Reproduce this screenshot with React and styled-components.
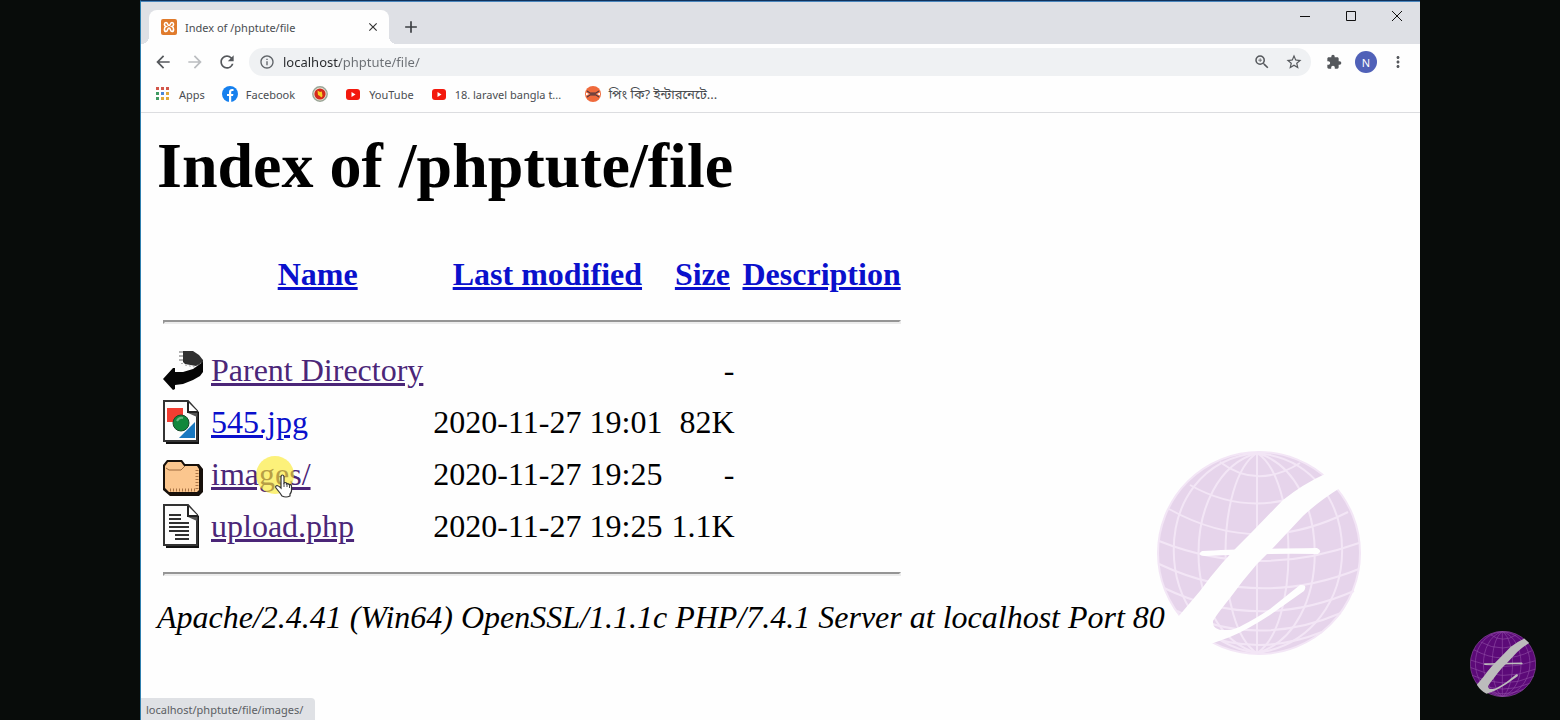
import React from "react";
import styled, { createGlobalStyle } from "styled-components";
import {
  MdAdd,
  MdArrowBack,
  MdArrowForward,
  MdClose,
  MdExtension,
  MdInfoOutline,
  MdMoreVert,
  MdRefresh,
  MdStarBorder,
  MdZoomIn,
} from "react-icons/md";

const uiFont = `"Noto Sans", "Noto Sans Bengali", sans-serif`;
const pageFont = `"Liberation Serif", "Times New Roman", serif`;

const GlobalStyle = createGlobalStyle`
  *, *::before, *::after { box-sizing: border-box; }
  body { margin: 0; background: #080c0a; }
  button { font: inherit; color: inherit; border: 0; padding: 0; background: none; }
`;

const Stage = styled.div`
  position: relative;
  display: flex;
  min-height: 100vh;
  padding: 0 140px;
  background: #080c0a;
`;

const Window = styled.div`
  position: relative;
  flex: 1;
  min-width: 0;
  display: flex;
  flex-direction: column;
  background: #fefefe;
  border-top: 1px solid #10325c;
  border-left: 1px solid #2f7fae;
  font-family: ${uiFont};
  font-size: 11px;
  color: #4a4d51;
`;

const TabStrip = styled.header`
  display: flex;
  align-items: flex-end;
  height: 43px;
  padding-left: 8px;
  background: #dee0e5;
  border-top: 1px solid #4a86bd;
`;

const Tab = styled.div`
  position: relative;
  display: flex;
  align-items: center;
  gap: 8px;
  width: 240px;
  height: 34px;
  padding: 0 8px 0 12px;
  background: #fefefe;
  border-radius: 8px 8px 0 0;

  &::before,
  &::after {
    content: "";
    position: absolute;
    bottom: 0;
    width: 8px;
    height: 8px;
  }
  &::before {
    left: -8px;
    background: radial-gradient(circle at 0 0, transparent 8px, #fefefe 8px);
  }
  &::after {
    right: -8px;
    background: radial-gradient(circle at 100% 0, transparent 8px, #fefefe 8px);
  }
`;

const TabTitle = styled.span`
  flex: 1;
  white-space: nowrap;
`;

const IconButton = styled.button`
  display: grid;
  place-items: center;
  flex: none;
  width: ${(p) => p.$w || 32}px;
  height: ${(p) => p.$h || 32}px;
  color: ${(p) => p.$color || "#55585c"};
  svg { display: block; }
`;

const Controls = styled.div`
  display: flex;
  align-self: flex-start;
  margin-left: auto;
`;

const Toolbar = styled.nav`
  display: flex;
  align-items: center;
  height: 36px;
  padding: 0 6px;
`;

const Omnibox = styled.form`
  flex: 1;
  display: flex;
  align-items: center;
  height: 28px;
  margin: 0 7px 0 6px;
  padding: 0 1px 0 10px;
  border-radius: 14px;
  background: #eff1f3;
  color: #5f6368;
`;

const Address = styled.input`
  flex: 1;
  min-width: 0;
  margin-left: 8px;
  padding: 0;
  border: 0;
  outline: 0;
  font-family: ${uiFont};
  font-size: 13px;
  color: transparent;
  background: linear-gradient(to right, #26282b 57px, #6b6f74 57px);
  background-clip: text;
`;

const Avatar = styled.span`
  display: grid;
  place-items: center;
  width: 22px;
  height: 22px;
  border-radius: 50%;
  background: #5061b8;
  color: #fff;
`;

const Bookmarks = styled.nav`
  display: flex;
  align-items: flex-start;
  gap: 17px;
  height: 33px;
  padding: 0 14px;
  border-bottom: 1px solid #dcdde0;
`;

const Bookmark = styled.a`
  display: flex;
  align-items: center;
  gap: 8px;
  height: 28px;
  min-width: ${(p) => p.$min || 0}px;
  color: inherit;
  font-size: ${(p) => (p.lang ? 13 : 11)}px;
  text-decoration: none;
  white-space: nowrap;
  svg { display: block; flex: none; }
`;

const Listing = styled.main`
  flex: 1;
  padding: 16px 16px 60px;
  font-family: ${pageFont};
  font-size: 32px;
  color: #000;
`;

const Heading = styled.h1`
  margin: 0 0 43px;
  font-size: 64px;
  line-height: 74px;
`;

const FileTable = styled.table`
  border-collapse: separate;
  border-spacing: 4px;
  font-size: 32px;
`;

const Row = styled.tr`
  height: 48px;
`;

const Cell = styled.td`
  padding: ${(p) => (p.$right ? "2px 2px 2px 3px" : "2px")};
  white-space: nowrap;
  text-align: ${(p) => (p.$right ? "right" : "left")};
  line-height: 36px;
  svg { display: block; }
`;

const NameCell = styled(Cell)`
  padding-right: 3px;
`;

const HeadCell = styled.th`
  padding: 2px;
  white-space: nowrap;
  line-height: 36px;
`;

const Link = styled.a`
  position: relative;
  color: ${(p) => (p.$visited ? "#4b2678" : "#0a10cc")};
  text-decoration: underline;
`;

const Rule = styled.hr`
  height: 4px;
  margin: 16px 0;
  border: 2px solid;
  border-color: #959595 #ececec #ececec #959595;
`;

const ServerLine = styled.address`
  line-height: 38px;
`;

const ClickSpot = styled.span`
  position: absolute;
  left: 45px;
  top: 0;
  width: 38px;
  height: 38px;
  border-radius: 50%;
  background: rgba(250, 232, 40, 0.62);
`;

const Pointer = styled.svg`
  position: absolute;
  left: 18px;
  top: 18px;
`;

const StatusBubble = styled.output`
  position: absolute;
  left: 0;
  bottom: 0;
  height: 22px;
  padding: 0 12px 0 5px;
  border-radius: 0 4px 0 0;
  background: #dfe1e5;
  color: #5b5e63;
  line-height: 23px;
`;

const Watermark = styled.div`
  position: absolute;
  right: 59px;
  bottom: 65px;
  svg { display: block; }
`;

const CornerLogo = styled.div`
  position: absolute;
  right: 24px;
  bottom: 23px;
  svg { display: block; }
`;

function Globe({ size, fill, line, stroke, lineWidth }) {
  return (
    <svg width={size} height={size} viewBox="0 0 204 204" aria-hidden="true">
      <circle cx="102" cy="102" r="101" fill={fill} stroke={line} strokeWidth={lineWidth} />
      <g fill="none" stroke={line} strokeWidth={lineWidth}>
        <path d="M100 2V202" />
        <path d="M100 2C58 28 58 176 100 202M100 2C142 28 142 176 100 202" />
        <path d="M100 2C22 24 22 180 100 202M100 2C177 24 177 180 100 202" />
        <path d="M100 2C-12 12 -10 186 100 202M100 2C214 12 213 186 100 202" />
        <path d="M63 11Q100 39 143 12" />
        <path d="M33 34Q100 72 173 32" />
        <path d="M12 58Q100 107 191 61" />
        <path d="M2 90Q100 129 202 92" />
        <path d="M2 113Q100 159 202 118" />
        <path d="M7 137Q100 182 197 140" />
        <path d="M20 160Q100 198 184 162" />
        <path d="M40 181Q100 207 165 181" />
      </g>
      <path
        fill={stroke}
        d="M168 23Q146 33 126 49L93 83Q62 113 43 140L21 166Q33 185 51 194L73 186Q90 179 113 164L147 140Q151 133 143 134L113 158Q98 168 86 174Q78 179 70 179Q55 180 56 170Q60 163 73 147Q86 129 100 113L115 98L146 65Q162 50 183 37Z"
      />
      <path fill={stroke} d="M45 100Q72 98 160 97Q166 100 161 103Q110 102 48 105Q39 104 45 100Z" />
    </svg>
  );
}

function BackIcon() {
  return (
    <svg width="40" height="44" viewBox="0 0 40 44" aria-hidden="true">
      <path d="M20 3L30 3L36 7L40 12V15L33 18L22 16L20 14Z" fill="#303030" />
      <path d="M17 3V15M19 3V16" stroke="#666" strokeDasharray="2 2" />
      <path d="M22 17L32 19L38 15" fill="none" stroke="#aaa" strokeDasharray="2 2" />
      <path d="M0 31L10 20H12V24H20L30 21L40 14V24L37 28L30 32L20 36L12 37V41L10 42Z" fill="#050505" />
    </svg>
  );
}

function Sheet({ children }) {
  return (
    <svg width="40" height="44" viewBox="0 0 40 44" aria-hidden="true">
      <path d="M2 2H25L36 12V44H3Z" fill="#111" />
      <path d="M1 1H25L34 11V41H1Z" fill="#fdfdfd" stroke="#333" strokeWidth="2" />
      <path d="M25 2V12H35" fill="#fff" stroke="#222" strokeWidth="2" />
      <path d="M25 13H34V17Z" fill="#555" />
      {children}
    </svg>
  );
}

function ImageIcon() {
  return (
    <Sheet>
      <path d="M4 8H20V22H4Z" fill="#f23d31" />
      <path d="M32 22V38H16Z" fill="#1878c0" />
      <circle cx="18" cy="23" r="8" fill="#11883c" stroke="#164a2b" />
      <path d="M14 21Q16 17 20 18" fill="none" stroke="#69b883" strokeWidth="2" />
    </Sheet>
  );
}

function TextIcon() {
  return (
    <Sheet>
      <path
        d="M6 11H18M6 15H18M6 19H26M6 23H26M6 27H26M12 31H26M12 35H26"
        stroke="#303030"
        strokeWidth="2"
      />
    </Sheet>
  );
}

function FolderIcon() {
  return (
    <svg width="40" height="44" viewBox="0 0 40 44" aria-hidden="true">
      <path d="M0 13L4 8H19L22 12H36L40 17V40L36 44H7L0 38Z" fill="#17100b" />
      <path d="M2 14L5 10H18L21 14H34L36 17V38L34 40H6L2 36Z" fill="#fbc68e" />
      <path d="M3 16L6 18H18L22 14" fill="none" stroke="#9b693d" strokeWidth="1" />
      <path d="M7 38H34M34 18V38" fill="none" stroke="#a87345" strokeWidth="3" strokeDasharray="1 2" />
    </svg>
  );
}

function XamppIcon() {
  return (
    <svg width="16" height="16" viewBox="0 0 16 16" aria-hidden="true">
      <rect width="16" height="16" rx="2" fill="#e07b2c" />
      <path
        d="M5 3.5C3 3.5 2.8 6.8 5 7.5C2.8 8.5 3 12.5 5 12.5C7 12.5 6.2 9 8 9C9.8 9 9 12.5 11 12.5C13 12.5 13.2 8.5 11 7.5C13.2 6.8 13 3.5 11 3.5C9 3.5 9.8 6.5 8 6.5C6.2 6.5 7 3.5 5 3.5Z"
        fill="none"
        stroke="#fff"
        strokeWidth="1.6"
      />
    </svg>
  );
}

function AppsIcon() {
  const colors = ["#d3564a", "#d3564a", "#d3564a", "#3e9a62", "#4a86d8", "#e0a83a", "#3e9a62", "#e0a83a", "#e0a83a"];
  return (
    <svg width="16" height="16" viewBox="0 0 16 16" aria-hidden="true">
      {colors.map((c, i) => (
        <rect key={i} x={1 + (i % 3) * 5} y={1 + Math.floor(i / 3) * 5} width="3" height="3" fill={c} />
      ))}
    </svg>
  );
}

function FacebookIcon() {
  return (
    <svg width="16" height="16" viewBox="0 0 16 16" aria-hidden="true">
      <circle cx="8" cy="8" r="8" fill="#1680ee" />
      <path d="M7 16V10H5V8H7V6.2C7 4.1 8.2 3 10 3L11.5 3.1V5H10.4C9.5 5 9.2 5.5 9.2 6.2V8H11.4L11 10H9.2V16Z" fill="#fff" />
    </svg>
  );
}

function YouTubeIcon() {
  return (
    <svg width="16" height="16" viewBox="0 0 16 16" aria-hidden="true">
      <rect x="1" y="3" width="14" height="11" rx="3" fill="#f3190d" />
      <path d="M6.5 6V11L10.5 8.5Z" fill="#fff" />
    </svg>
  );
}

function SealIcon() {
  return (
    <svg width="16" height="16" viewBox="0 0 16 16" aria-hidden="true">
      <circle cx="8" cy="8" r="7.2" fill="#e9e4d6" stroke="#9aa596" strokeWidth="1.4" />
      <circle cx="8" cy="8" r="5.6" fill="#d4281c" />
      <path d="M5.5 4.5L8 6L9.8 5.4L10.5 10L9.5 11.5L7.5 9.8L6 9Z" fill="#f8cf23" />
    </svg>
  );
}

function NetworkIcon() {
  return (
    <svg width="16" height="16" viewBox="0 0 16 16" aria-hidden="true">
      <circle cx="8" cy="8" r="8" fill="#ef6a3c" />
      <path d="M2 5L5 7H11L14 5M2 11L5 9H11L14 11M6 7V9M8 7V9M10 7V9" fill="none" stroke="#4d3740" strokeWidth="1.1" />
      <path d="M1 6.5L4 8L1 9.5ZM15 6.5L12 8L15 9.5Z" fill="#fff" />
    </svg>
  );
}

const bookmarks = [
  { id: "apps", label: "Apps", icon: <AppsIcon /> },
  { id: "facebook", label: "Facebook", icon: <FacebookIcon /> },
  { id: "seal", icon: <SealIcon /> },
  { id: "youtube", label: "YouTube", icon: <YouTubeIcon /> },
  { id: "laravel", label: "18. laravel bangla t...", icon: <YouTubeIcon />, min: 137 },
  { id: "ping", label: "পিং কি? ইন্টারনেটে...", icon: <NetworkIcon />, lang: "bn" },
];

const files = [
  { name: "Parent Directory", icon: <BackIcon />, date: "", size: "-", visited: true },
  { name: "545.jpg", icon: <ImageIcon />, date: "2020-11-27 19:01", size: "82K" },
  { name: "images/", icon: <FolderIcon />, date: "2020-11-27 19:25", size: "-", visited: true, hovered: true },
  { name: "upload.php", icon: <TextIcon />, date: "2020-11-27 19:25", size: "1.1K", visited: true },
];

function HoverMark() {
  return (
    <ClickSpot>
      <Pointer width="20" height="24" viewBox="0 0 20 24" aria-hidden="true">
        <path
          d="M7 14V3Q7 1 8.5 1Q10 1 10 3V9Q11 8 12.5 9V10Q14 9 15 10.5Q17 10 17.5 12V17Q17 19 16 20V22Q12 24 8 22L6 19L2 14Q1 12 3 11.5Q5 12 7 14Z"
          fill="#fff"
          stroke="#333"
          strokeWidth="1.2"
        />
        <path d="M10 9V13M13 10V13M15.5 11V14" stroke="#444" fill="none" />
      </Pointer>
    </ClickSpot>
  );
}

export default function App() {
  return (
    <Stage>
      <GlobalStyle />
      <Window>
        <TabStrip>
          <Tab>
            <XamppIcon />
            <TabTitle>Index of /phptute/file</TabTitle>
            <IconButton $w={16} $h={16} $color="#333" aria-label="Close tab"><MdClose size={14} /></IconButton>
          </Tab>
          <IconButton $w={44} $h={34} $color="#3b3e42" aria-label="New tab"><MdAdd size={20} /></IconButton>
          <Controls>
            <IconButton $w={46} $h={28} $color="#111" aria-label="Minimize">
              <svg width="12" height="12"><path d="M1 6.5H11" stroke="currentColor" /></svg>
            </IconButton>
            <IconButton $w={46} $h={28} $color="#111" aria-label="Maximize">
              <svg width="12" height="12"><path d="M1.5 1.5H10.5V10.5H1.5Z" fill="none" stroke="currentColor" /></svg>
            </IconButton>
            <IconButton $w={46} $h={28} $color="#111" aria-label="Close window">
              <svg width="12" height="12"><path d="M1 1L11 11M11 1L1 11" stroke="currentColor" /></svg>
            </IconButton>
          </Controls>
        </TabStrip>

        <Toolbar aria-label="Navigation">
          <IconButton aria-label="Back"><MdArrowBack size={20} /></IconButton>
          <IconButton $color="#bbbdc0" aria-label="Forward"><MdArrowForward size={20} /></IconButton>
          <IconButton aria-label="Reload"><MdRefresh size={20} /></IconButton>
          <Omnibox onSubmit={(e) => e.preventDefault()}>
            <MdInfoOutline size={16} />
            <Address aria-label="Address" defaultValue="localhost/phptute/file/" />
            <IconButton type="button" $h={28} aria-label="Zoom"><MdZoomIn size={18} /></IconButton>
            <IconButton type="button" $h={28} aria-label="Bookmark this page"><MdStarBorder size={18} /></IconButton>
          </Omnibox>
          <IconButton aria-label="Extensions"><MdExtension size={16} /></IconButton>
          <IconButton aria-label="Profile"><Avatar>N</Avatar></IconButton>
          <IconButton aria-label="Menu"><MdMoreVert size={18} /></IconButton>
        </Toolbar>

        <Bookmarks aria-label="Bookmarks">
          {bookmarks.map((b) => (
            <Bookmark key={b.id} href="#" $min={b.min} lang={b.lang} aria-label={b.label || "Bookmark"}>
              {b.icon}
              {b.label}
            </Bookmark>
          ))}
        </Bookmarks>

        <Listing>
          <Heading>Index of /phptute/file</Heading>
          <FileTable>
            <thead>
              <Row>
                <HeadCell />
                <HeadCell><Link href="#name">Name</Link></HeadCell>
                <HeadCell><Link href="#modified">Last modified</Link></HeadCell>
                <HeadCell><Link href="#size">Size</Link></HeadCell>
                <HeadCell><Link href="#description">Description</Link></HeadCell>
              </Row>
              <tr><HeadCell colSpan={5}><Rule /></HeadCell></tr>
            </thead>
            <tbody>
              {files.map((f) => (
                <Row key={f.name}>
                  <Cell>{f.icon}</Cell>
                  <NameCell>
                    <Link href="#" $visited={f.visited}>
                      {f.name}
                      {f.hovered && <HoverMark />}
                    </Link>
                  </NameCell>
                  <Cell $right>{f.date}</Cell>
                  <Cell $right>{f.size}</Cell>
                  <Cell />
                </Row>
              ))}
              <tr><Cell colSpan={5}><Rule /></Cell></tr>
            </tbody>
          </FileTable>
          <ServerLine>Apache/2.4.41 (Win64) OpenSSL/1.1.1c PHP/7.4.1 Server at localhost Port 80</ServerLine>
        </Listing>

        <Watermark>
          <Globe size={204} fill="#e6d4eb" line="#f3e6f6" stroke="#fefefe" lineWidth={2} />
        </Watermark>
        <StatusBubble>localhost/phptute/file/images/</StatusBubble>
      </Window>
      <CornerLogo>
        <Globe size={66} fill="#5c0a78" line="#8d4ba3" stroke="#bcbcbc" lineWidth={2} />
      </CornerLogo>
    </Stage>
  );
}
